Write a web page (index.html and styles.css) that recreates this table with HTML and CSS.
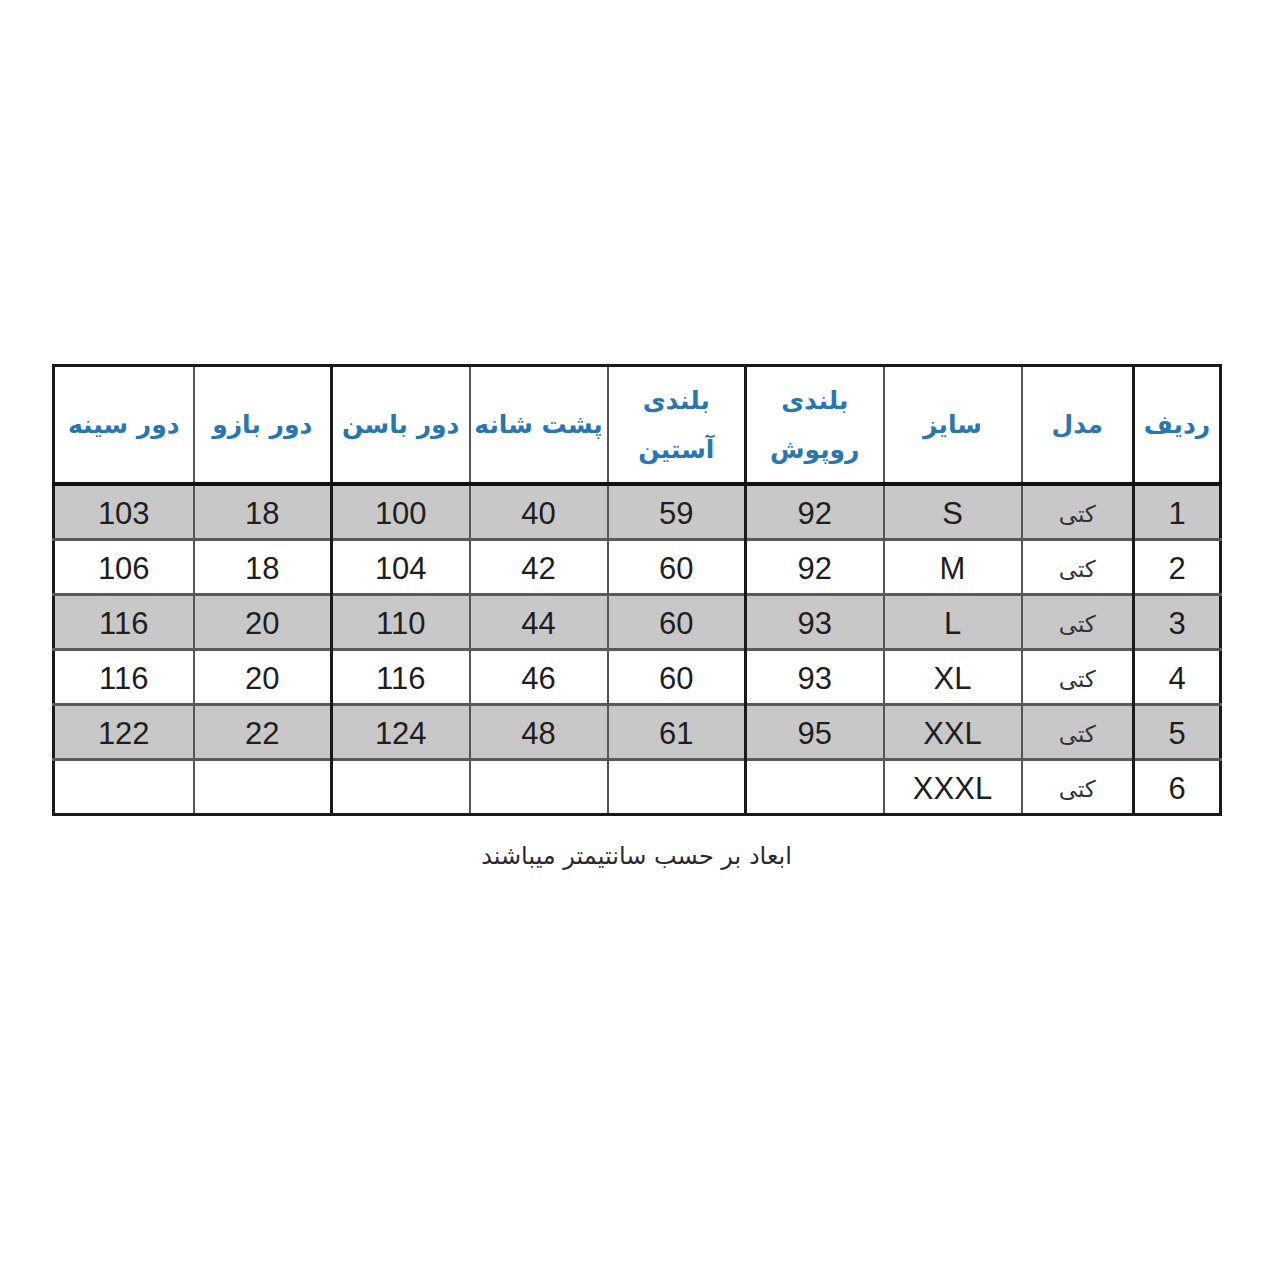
FILE: index.html
```html
<!DOCTYPE html>
<html lang="fa">
<head>
<meta charset="utf-8">
<title>جدول سایز</title>
<link rel="stylesheet" href="styles.css">
</head>
<body>
<div class="page">
  <div class="sheet">
    <table class="sizes" dir="rtl">
      <colgroup>
        <col class="c-row"><col class="c-model"><col class="c-std"><col class="c-std"><col class="c-std"><col class="c-std"><col class="c-std"><col class="c-std"><col class="c-last">
      </colgroup>
      <thead>
        <tr>
          <th class="thick">ردیف</th>
          <th>مدل</th>
          <th class="thin">سایز</th>
          <th class="thick">بلندی<br>روپوش</th>
          <th>بلندی<br>آستین</th>
          <th>پشت شانه</th>
          <th class="thick">دور باسن</th>
          <th>دور بازو</th>
          <th>دور سینه</th>
        </tr>
      </thead>
      <tbody>
        <tr class="shade"><td class="thick">1</td><td class="fa">کتی</td><td class="thin">S</td><td class="thick">92</td><td>59</td><td>40</td><td class="thick">100</td><td>18</td><td>103</td></tr>
        <tr><td class="thick">2</td><td class="fa">کتی</td><td class="thin">M</td><td class="thick">92</td><td>60</td><td>42</td><td class="thick">104</td><td>18</td><td>106</td></tr>
        <tr class="shade"><td class="thick">3</td><td class="fa">کتی</td><td class="thin">L</td><td class="thick">93</td><td>60</td><td>44</td><td class="thick">110</td><td>20</td><td>116</td></tr>
        <tr><td class="thick">4</td><td class="fa">کتی</td><td class="thin">XL</td><td class="thick">93</td><td>60</td><td>46</td><td class="thick">116</td><td>20</td><td>116</td></tr>
        <tr class="shade"><td class="thick">5</td><td class="fa">کتی</td><td class="thin">XXL</td><td class="thick">95</td><td>61</td><td>48</td><td class="thick">124</td><td>22</td><td>122</td></tr>
        <tr><td class="thick">6</td><td class="fa">کتی</td><td class="thin">XXXL</td><td class="thick"></td><td></td><td></td><td class="thick"></td><td></td><td></td></tr>
      </tbody>
    </table>
    <p class="note" dir="rtl">ابعاد بر حسب سانتیمتر میباشند</p>
  </div>
</div>
</body>
</html>
```

FILE: styles.css
```css
html, body {
  margin: 0;
  padding: 0;
  background: #ffffff;
}

.page {
  width: 1280px;
  height: 1280px;
  padding-top: 364px;
  box-sizing: border-box;
}

.sheet {
  width: 1169px;
  margin-left: 52px;
}

.sizes {
  width: 1169px;
  border-collapse: collapse;
  table-layout: fixed;
  border: 3px solid #1a1a1a;
}

.c-row { width: 87px; }
.c-model { width: 112px; }
.c-std { width: 138px; }
.c-last { width: 140px; }

.sizes th,
.sizes td {
  padding: 0;
  text-align: center;
  vertical-align: middle;
  border-left: 2px solid #555555;
  border-right: 2px solid #555555;
}

.sizes th {
  height: 115px;
  font-family: "DejaVu Sans", "Noto Sans", sans-serif;
  font-weight: bold;
  font-size: 25px;
  line-height: 49px;
  color: #2a76ae;
  background: #ffffff;
  border-bottom: 4px solid #111111;
}

.sizes td {
  height: 48px;
  padding-top: 4px;
  font-family: "Liberation Sans", Arial, sans-serif;
  font-size: 31px;
  color: #1e1e1e;
  border-top: 3px solid #5a5a5a;
  background: #ffffff;
}

.sizes tbody tr:first-child td {
  border-top: 4px solid #111111;
}

.sizes .thick {
  border-left: 3px solid #1a1a1a;
}

.sizes tr.shade td {
  background: #c8c8c8;
}

.sizes td.fa {
  font-family: "DejaVu Sans", "Noto Sans", sans-serif;
  font-size: 23px;
  color: #333333;
}

.note {
  margin: 26px 0 0 0;
  text-align: center;
  font-family: "DejaVu Sans", "Noto Sans", sans-serif;
  font-size: 24px;
  color: #2a2a2a;
}
```
